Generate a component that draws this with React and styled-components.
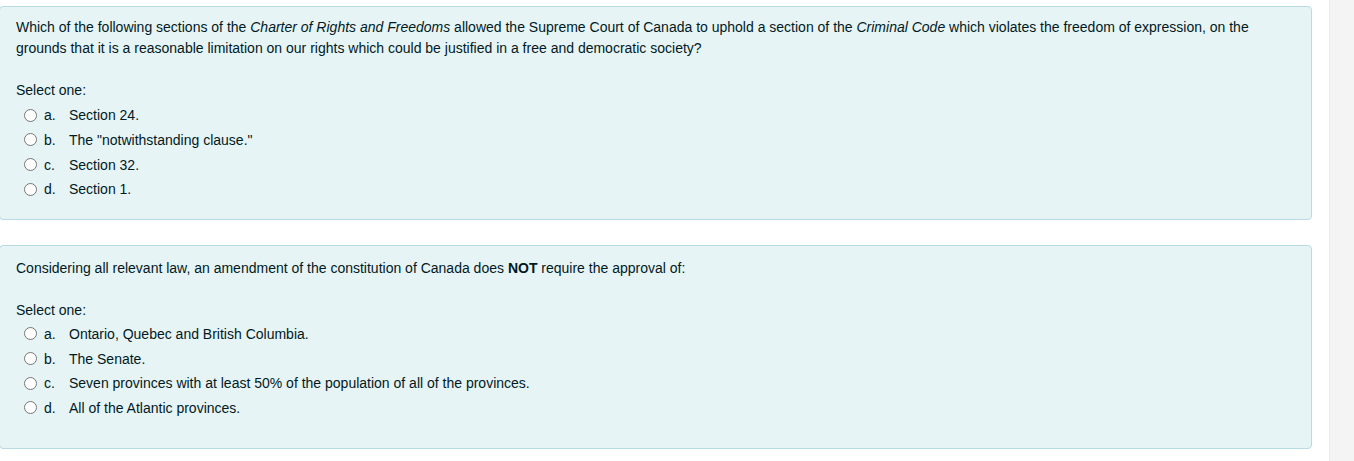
import React from "react";
import styled, { createGlobalStyle } from "styled-components";

const Global = createGlobalStyle`
  html, body { margin: 0; padding: 0; background: #fff; }
  body {
    font-family: "Liberation Sans", Arial, sans-serif;
    font-size: 14px;
    color: #001a1e;
  }
`;

const Page = styled.div`
  display: flex;
  width: 1354px;
  height: 461px;
  overflow: hidden;
`;

const Main = styled.main`
  flex: 1;
  display: flex;
  flex-direction: column;
  gap: 25px;
  padding: 6px 17px 0 0;
  margin-left: -1px;
`;

const Aside = styled.aside`
  width: 24px;
  background: #f4f4f4;
  border-left: 1px solid #ebebeb;
`;

const Card = styled.section`
  background: #e7f4f6;
  border: 1px solid #b8dce2;
  border-radius: 4px;
  padding: ${(p) => p.$top}px 15px ${(p) => p.$bottom}px 16px;
`;

const QText = styled.p`
  margin: 0 0 21px;
  line-height: 21px;
`;

const Prompt = styled.div`
  line-height: 21px;
`;

const Answers = styled.div`
  margin-top: ${(p) => p.$gap}px;
  display: flex;
  flex-direction: column;
`;

const Row = styled.label`
  display: flex;
  align-items: center;
  height: 24.67px;
  padding-left: 8px;
`;

const Radio = styled.span`
  box-sizing: border-box;
  width: 13px;
  height: 13px;
  border-radius: 50%;
  border: 1px solid #767676;
  background: #fff;
  margin-right: 7px;
  flex: none;
`;

const Letter = styled.span`
  width: 25px;
  flex: none;
`;

const questions = [
  {
    top: 10,
    bottom: 17,
    gap: 2,
    text: (
      <>
        Which of the following sections of the <em>Charter of Rights and Freedoms</em> allowed
        the Supreme Court of Canada to uphold a section of the <em>Criminal Code</em> which
        violates the freedom of expression, on the grounds that it is a reasonable limitation on
        our rights which could be justified in a free and democratic society?
      </>
    ),
    answers: [
      "Section 24.",
      'The "notwithstanding clause."',
      "Section 32.",
      "Section 1.",
    ],
  },
  {
    top: 12,
    bottom: 28,
    gap: 1,
    text: (
      <>
        Considering all relevant law, an amendment of the constitution of Canada does{" "}
        <strong>NOT</strong> require the approval of:
      </>
    ),
    answers: [
      "Ontario, Quebec and British Columbia.",
      "The Senate.",
      "Seven provinces with at least 50% of the population of all of the provinces.",
      "All of the Atlantic provinces.",
    ],
  },
];

const letters = ["a.", "b.", "c.", "d."];

export default function App() {
  return (
    <>
      <Global />
      <Page>
        <Main>
          {questions.map((q, i) => (
            <Card key={i} $top={q.top} $bottom={q.bottom}>
              <QText>{q.text}</QText>
              <Prompt>Select one:</Prompt>
              <Answers $gap={q.gap}>
                {q.answers.map((a, j) => (
                  <Row key={j}>
                    <Radio />
                    <Letter>{letters[j]}</Letter>
                    <span>{a}</span>
                  </Row>
                ))}
              </Answers>
            </Card>
          ))}
        </Main>
        <Aside />
      </Page>
    </>
  );
}
